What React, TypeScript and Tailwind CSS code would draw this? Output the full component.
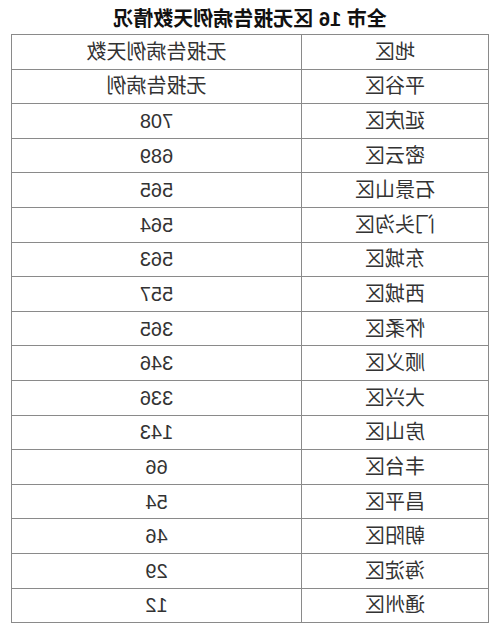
const rows: [string, string][] = [
  ["平谷区", "无报告病例"],
  ["延庆区", "708"],
  ["密云区", "689"],
  ["石景山区", "565"],
  ["门头沟区", "564"],
  ["东城区", "563"],
  ["西城区", "557"],
  ["怀柔区", "365"],
  ["顺义区", "346"],
  ["大兴区", "336"],
  ["房山区", "143"],
  ["丰台区", "66"],
  ["昌平区", "54"],
  ["朝阳区", "46"],
  ["海淀区", "29"],
  ["通州区", "12"],
];

export default function App() {
  return (
    // the screenshot is a mirrored copy of the table, so flip the whole page
    <div className="w-[500px] h-[629px] bg-white -scale-x-100 font-['Liberation_Sans','Noto_Sans_CJK_SC',sans-serif]">
      <h1 className="h-[34px] pt-[4px] flex items-center justify-center text-[20px] font-bold text-[#111] leading-none">
        全市 16 区无报告病例天数情况
      </h1>

      <div className="mx-[11px] border-x border-t border-[#8a8a8a] text-[20px] text-[#333] leading-none">
        <div className="grid grid-cols-[187px_1fr] h-[34.6px] border-b border-[#8a8a8a]">
          <div className="flex items-center justify-center border-r border-[#8a8a8a]">地区</div>
          <div className="flex items-center justify-center">无报告病例天数</div>
        </div>
        {rows.map(([area, days]) => (
          <div key={area} className="grid grid-cols-[187px_1fr] h-[34.6px] border-b border-[#8a8a8a]">
            <div className="flex items-center justify-center border-r border-[#8a8a8a]">{area}</div>
            <div className="flex items-center justify-center">{days}</div>
          </div>
        ))}
      </div>
    </div>
  );
}
